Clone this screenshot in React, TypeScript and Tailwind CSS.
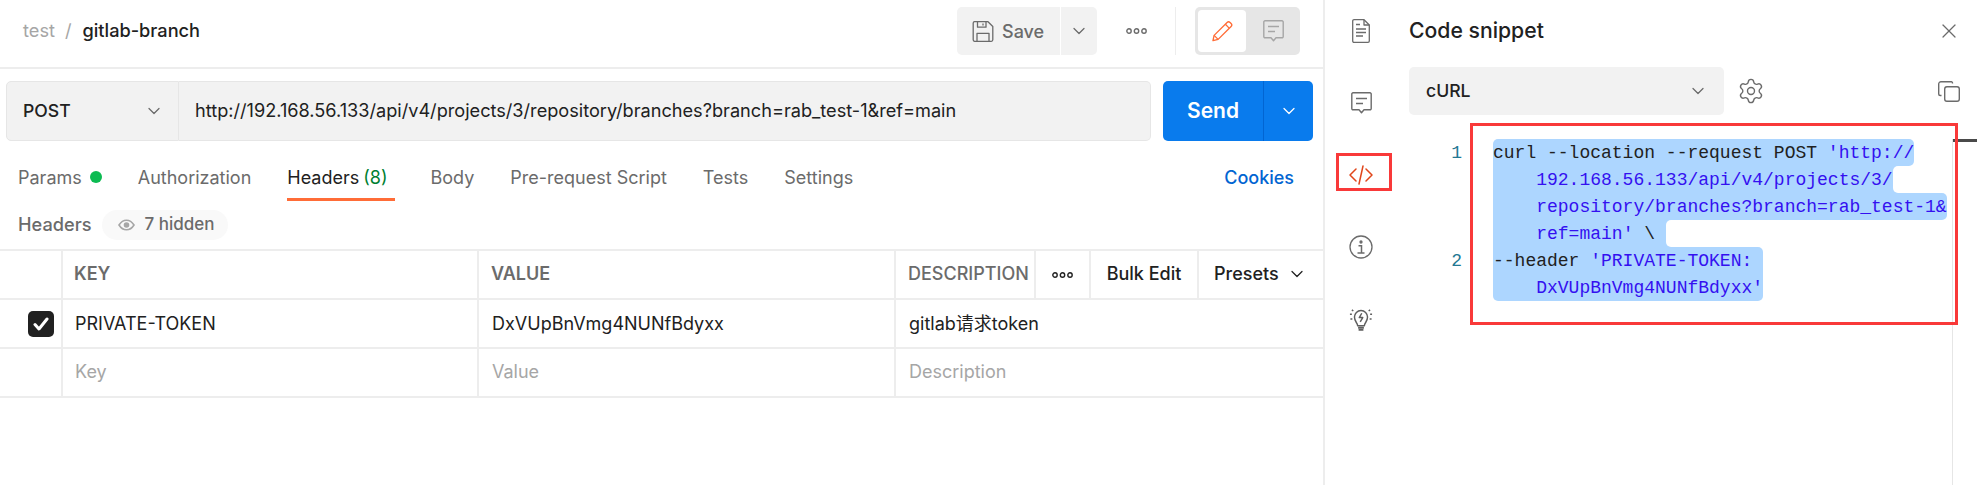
import React from 'react';
import { ChevronDown, X, Settings } from 'lucide-react';

const DotsIcon = ({ className = '' }: { className?: string }) => (
  <svg viewBox="0 0 21 6" className={className} fill="none" stroke="currentColor" strokeWidth="1.4">
    <circle cx="3" cy="3" r="2.2" />
    <circle cx="10.5" cy="3" r="2.2" />
    <circle cx="18" cy="3" r="2.2" />
  </svg>
);

const SaveIcon = () => (
  <svg viewBox="0 0 21 21" className="w-[22px] h-[21px] text-[#6b6b6b]" fill="none" stroke="currentColor" strokeWidth="1.3" strokeLinejoin="round">
    <path d="M2 .7h13.5l4.8 4.8v13.3a1.5 1.5 0 0 1-1.5 1.5H2a1.5 1.5 0 0 1-1.3-1.5V2A1.5 1.5 0 0 1 2 .7z" />
    <path d="M5 .7v5.5h8.5V.7M10.5 2.5v2M4.5 20.3v-8h12v8" />
  </svg>
);

const PencilIcon = () => (
  <svg viewBox="0 0 22 22" className="w-[21px] h-[22px] text-[#ff6c37]" fill="none" stroke="currentColor" strokeWidth="1.4" strokeLinejoin="round">
    <path d="M1 21l1.2-5.4L15.8 2a2.2 2.2 0 0 1 3.1 0l1.1 1.1a2.2 2.2 0 0 1 0 3.1L6.4 19.8 1 21z" />
    <path d="M14 4l4 4M2.2 15.6l4.2 4.2" />
  </svg>
);

const CommentIcon = ({ className = '' }: { className?: string }) => (
  <svg viewBox="0 0 21 22" className={className} fill="none" stroke="currentColor" strokeWidth="1.4" strokeLinejoin="round">
    <path d="M2 .8h17a1.2 1.2 0 0 1 1.2 1.2v14.6a1.2 1.2 0 0 1-1.2 1.2h-6l-2.5 3-2.5-3H2A1.2 1.2 0 0 1 .8 16.6V2A1.2 1.2 0 0 1 2 .8z" />
    <path d="M5 6.5h11M5 11.5h7" />
  </svg>
);

const DocIcon = () => (
  <svg viewBox="0 0 18 24" className="w-[18px] h-[24px] text-[#6b6b6b]" fill="none" stroke="currentColor" strokeWidth="1.3" strokeLinejoin="round">
    <path d="M2 .7h10l5.3 5.3v16a1.3 1.3 0 0 1-1.3 1.3H2A1.3 1.3 0 0 1 .7 22V2A1.3 1.3 0 0 1 2 .7z" />
    <path d="M12 .7v5.3h5.3M4 5.5h4M4 10h10M4 13.5h10M4 17h7" />
  </svg>
);

const CodeIcon = () => (
  <svg viewBox="0 0 24 20" className="w-[24px] h-[20px] text-[#e0461b]" fill="none" stroke="currentColor" strokeWidth="1.5" strokeLinecap="round" strokeLinejoin="round">
    <path d="M7 4l-6 6 6 6M17 4l6 6-6 6M14 1l-4 18" />
  </svg>
);

const InfoIcon = () => (
  <svg viewBox="0 0 24 24" className="w-[24px] h-[24px] text-[#6b6b6b]" fill="none" stroke="currentColor" strokeWidth="1.3">
    <circle cx="12" cy="12" r="11" />
    <circle cx="12" cy="7" r="1" fill="currentColor" />
    <path d="M9.5 10.8h3v7M8.5 18h7" strokeWidth="1.5" />
  </svg>
);

const BulbIcon = () => (
  <svg viewBox="0 0 24 26" className="w-[24px] h-[25px] text-[#5f5f5f]" fill="none" stroke="currentColor" strokeWidth="1.5" strokeLinejoin="round">
    <path d="M8.5 19.5c0-3-3.3-4.2-3.3-9a6.8 6.800 0 0 1 13.600 0c0 4.800-3.300 6-3.300 9z" />
    <path d="M12.800 6.500l-2.600 4.500h3.600l-2.600 4.500" />
    <path d="M9 21.500h6M9.500 23.800h5" strokeWidth="2" />
    <path d="M.5 7.500h2M1 12.500h2M21.500 7.500h2M21 12.500h2M2.500 3l1.500 1.200M21.500 3L20 4.200" />
  </svg>
);

const CopyIcon = () => (
  <svg viewBox="0 0 22 21" className="w-[22px] h-[21px] text-[#6b6b6b]" fill="none" stroke="currentColor" strokeWidth="1.4" strokeLinejoin="round">
    <rect x="6.7" y="5.7" width="14.6" height="14.6" rx="2.2" />
    <path d="M14.5 2.5V2A1.3 1.3 0 0 0 13 .7H3A2.3 2.3 0 0 0 .7 3v10a1.5 1.5 0 0 0 1.5 1.5h1.3" />
  </svg>
);

const EyeIcon = () => (
  <svg viewBox="0 0 17 12" className="w-[17px] h-[12px] text-[#a6a6a6]" fill="none" stroke="currentColor" strokeWidth="1.6">
    <path d="M1 6c2-3.2 4.500-4.800 7.500-4.800S14 2.800 16 6c-2 3.200-4.500 4.800-7.500 4.800S3 9.200 1 6z" />
    <circle cx="8.500" cy="6" r="2" fill="currentColor" />
  </svg>
);

const tabs = ['Body', 'Pre-request Script', 'Tests', 'Settings'];

// each visual line of the wrapped snippet
const codeLines = [
  { no: '1', dark: 'curl --location --request POST ', blue: "'http://", corners: 'rounded-tl-[5px] rounded-r-[5px]' },
  { no: '', dark: '', blue: '    192.168.56.133/api/v4/projects/3/', corners: '', notch: true },
  { no: '', dark: '', blue: '    repository/branches?branch=rab_test-1&', corners: 'rounded-r-[5px]' },
  { no: '', dark: '    ', blue: "ref=main'", tail: ' \\ ', corners: '', notch: true },
  { no: '2', dark: '--header ', blue: "'PRIVATE-TOKEN: ", corners: 'rounded-tr-[5px]' },
  { no: '', dark: '', blue: "    DxVUpBnVmg4NUNfBdyxx'", corners: 'rounded-b-[5px]' },
];

export default function App() {
  return (
    <div className="relative w-[1977px] h-[485px] bg-white flex overflow-hidden font-['Inter','Noto_Sans_CJK_SC',sans-serif] text-[18px] text-[#212121]">
      {/* request pane */}
      <div className="w-[1325px] shrink-0 border-r-2 border-[#ededed] flex flex-col">
        <div className="h-[69px] shrink-0 border-b-2 border-[#ededed] flex items-center pb-[5px] pl-[23px] pr-[23px]">
          <span className="text-[18.2px] text-[#a6a6a6]">test</span>
          <span className="text-[18.2px] text-[#a6a6a6] ml-[10px]">/</span>
          <span className="text-[18.2px] font-medium ml-[11px]">gitlab-branch</span>
          <div className="ml-auto flex items-center">
            <div className="w-[103px] h-[48px] bg-[#f2f2f2] rounded-l-[5px] flex items-center pl-[15px] gap-[8px] text-[18px] font-medium text-[#6b6b6b]">
              <SaveIcon />
              Save
            </div>
            <div className="w-[36px] h-[48px] ml-[1px] bg-[#f2f2f2] rounded-r-[5px] flex items-center justify-center text-[#6b6b6b]">
              <ChevronDown size={20} strokeWidth={1.5} />
            </div>
            <div className="w-[78px] flex justify-center text-[#6b6b6b]">
              <DotsIcon className="w-[21px] h-[6px]" />
            </div>
            <div className="w-px h-[48px] bg-[#ededed]" />
            <div className="ml-[19px] w-[105px] h-[48px] bg-[#e6e6e6] rounded-[5px] flex items-center pl-[3px]">
              <div className="w-[48px] h-[42px] bg-white rounded-[4px] flex items-center justify-center">
                <PencilIcon />
              </div>
              <div className="flex-1 flex justify-center">
                <CommentIcon className="w-[21px] h-[22px] text-[#a6a6a6]" />
              </div>
            </div>
          </div>
        </div>

        {/* url bar */}
        <div className="flex mt-[12px] pl-[6px] pr-[10px] h-[60px] shrink-0">
          <div className="w-[173px] h-full bg-[#f2f2f2] border border-[#e6e6e6] rounded-l-[5px] flex items-center pl-[16px] pr-[14px] text-[17.6px] font-medium">
            POST
            <ChevronDown size={20} strokeWidth={1.5} className="ml-auto text-[#6b6b6b]" />
          </div>
          <div className="w-[972px] h-full bg-[#f2f2f2] border border-l-0 border-[#e6e6e6] rounded-r-[5px] flex items-center pl-[16px] text-[18.15px]">
            http://192.168.56.133/api/v4/projects/3/repository/branches?branch=rab_test-1&amp;ref=main
          </div>
          <div className="ml-[12px] w-[150px] h-full bg-[#097bed] rounded-[5px] flex text-white">
            <div className="w-[101px] flex items-center justify-center text-[21px] font-semibold border-r border-[#0265d2]">Send</div>
            <div className="flex-1 flex items-center justify-center">
              <ChevronDown size={20} strokeWidth={1.5} />
            </div>
          </div>
        </div>

        {/* tabs */}
        <div className="flex items-stretch h-[48px] mt-[12px] shrink-0 pl-[18px] pr-[29px] gap-[36px] text-[18px] text-[#6b6b6b]">
          <div className="flex items-center gap-[8px]">
            Params
            <span className="w-[12px] h-[12px] rounded-full bg-[#0cbb52]" />
          </div>
          <div className="flex items-center">Authorization</div>
          <div className="flex items-center border-b-[3px] border-[#ff6c37] pt-[3px] text-[#212121] pr-[7px]">
            Headers
            <span className="ml-[4px] text-[#007f31]">(8)</span>
          </div>
          {tabs.map((tab) => (
            <div key={tab} className="flex items-center">{tab}</div>
          ))}
          <div className="ml-auto flex items-center font-medium text-[#0265d2]">Cookies</div>
        </div>

        <div className="flex items-center h-[30px] mt-[9px] shrink-0 pl-[18px] text-[#6b6b6b] text-[18.2px] font-medium">
          Headers
          <div className="ml-[10px] h-[30px] w-[126px] rounded-full bg-[#f9f9f9] flex items-center pl-[16px] gap-[10px] text-[17px]">
            <EyeIcon />
            7 hidden
          </div>
        </div>

        {/* headers table */}
        <div className="mt-[9px] border-t-2 border-[#ededed]">
          <div className="flex h-[49px] border-b-2 border-[#ededed] items-stretch">
            <div className="w-[63px] border-r-2 border-[#ededed]" />
            <div className="w-[416px] border-r-2 border-[#ededed] flex items-center pb-[2px] pl-[11px] font-semibold text-[#6b6b6b]">KEY</div>
            <div className="w-[417px] border-r-2 border-[#ededed] flex items-center pb-[2px] pl-[12px] font-semibold text-[#6b6b6b]">VALUE</div>
            <div className="w-[140px] border-r-2 border-[#ededed] flex items-center pb-[2px] pl-[12px] font-medium text-[#6b6b6b] whitespace-nowrap">DESCRIPTION</div>
            <div className="w-[55px] border-r-2 border-[#ededed] flex items-center justify-center">
              <DotsIcon className="w-[21px] h-[6px] text-[#212121]" />
            </div>
            <div className="w-[108px] border-r-2 border-[#ededed] flex items-center pb-[2px] justify-center font-medium">Bulk Edit</div>
            <div className="flex-1 flex items-center pb-[2px] pl-[15px] font-medium">
              Presets
              <ChevronDown size={20} strokeWidth={1.5} className="ml-[8px]" />
            </div>
          </div>
          <div className="flex h-[49px] border-b-2 border-[#ededed] items-stretch">
            <div className="w-[63px] border-r-2 border-[#ededed] flex items-center justify-end pr-[7px]">
              <div className="w-[26px] h-[26px] bg-[#212121] rounded-[5px] flex items-center justify-center">
                <svg viewBox="0 0 16 14" className="w-[16px] h-[14px]" fill="none" stroke="white" strokeWidth="3" strokeLinecap="round" strokeLinejoin="round">
                  <path d="M2 7.500l4 4.500 8-10" />
                </svg>
              </div>
            </div>
            <div className="w-[416px] border-r-2 border-[#ededed] flex items-center pl-[12px]">PRIVATE-TOKEN</div>
            <div className="w-[417px] border-r-2 border-[#ededed] flex items-center pl-[13px]">DxVUpBnVmg4NUNfBdyxx</div>
            <div className="flex-1 flex items-center pl-[13px]">gitlab请求token</div>
          </div>
          <div className="flex h-[49px] border-b-2 border-[#ededed] items-stretch text-[#a6a6a6]">
            <div className="w-[63px] border-r-2 border-[#ededed]" />
            <div className="w-[416px] border-r-2 border-[#ededed] flex items-center pb-[2px] pl-[12px]">Key</div>
            <div className="w-[417px] border-r-2 border-[#ededed] flex items-center pb-[2px] pl-[13px]">Value</div>
            <div className="flex-1 flex items-center pb-[2px] pl-[13px]">Description</div>
          </div>
        </div>
      </div>

      {/* context bar icons */}
      <div className="w-[72px] shrink-0 flex flex-col items-center gap-[10px]">
        <div className="h-[62px] flex items-center"><DocIcon /></div>
        <div className="h-[62px] flex items-center"><CommentIcon className="w-[21px] h-[22px] text-[#6b6b6b]" /></div>
        <div className="h-[62px] flex items-center"><CodeIcon /></div>
        <div className="h-[62px] flex items-center"><InfoIcon /></div>
        <div className="h-[62px] flex items-center"><BulbIcon /></div>
      </div>

      {/* code snippet */}
      <div className="flex-1 pl-[12px] flex flex-col">
        <div className="h-[62px] shrink-0 flex items-center pr-[16px]">
          <span className="text-[21.2px] font-medium">Code snippet</span>
          <X size={24} strokeWidth={1.2} className="ml-auto text-[#6b6b6b]" />
        </div>
        <div className="mt-[5px] h-[48px] shrink-0 flex items-center pr-[17px]">
          <div className="w-[315px] h-full bg-[#f2f2f2] rounded-[5px] flex items-center pl-[17px] pr-[16px] text-[17.6px] font-medium">
            cURL
            <ChevronDown size={20} strokeWidth={1.5} className="ml-auto text-[#6b6b6b]" />
          </div>
          <Settings size={28} strokeWidth={1.2} className="ml-[13px] text-[#6b6b6b]" />
          <div className="ml-auto"><CopyIcon /></div>
        </div>
        <div className="mt-[24px] font-['Liberation_Mono',monospace] text-[18px] leading-[29px]">
          {codeLines.map((line, i) => (
            <div key={i} className="flex h-[27px]">
              <div className="w-[53px] text-right text-[#237893]">{line.no}</div>
              <div className={`ml-[31px] whitespace-pre bg-[#add6ff] ${line.corners}`}>
                <span>{line.dark}</span>
                <span className="text-[#3410f0]">{line.blue}</span>
                {line.tail && <span>{line.tail}</span>}
              </div>
              {line.notch && (
                <div className="w-[5px] bg-[#add6ff]">
                  <div className="h-full bg-white rounded-l-[5px]" />
                </div>
              )}
            </div>
          ))}
        </div>
      </div>

      {/* editor ruler */}
      <div className="absolute left-[1952px] top-[139px] bottom-0 w-px bg-[#e6e6e6]" />
      <div className="absolute left-[1953px] top-[139px] right-0 h-[3px] bg-[#4a4a4a]" />

      {/* red annotation boxes */}
      <div className="absolute left-[1336px] top-[153px] w-[56px] h-[38px] border-[3px] border-[#f93939]" />
      <div className="absolute left-[1470px] top-[123px] w-[488px] h-[202px] border-[3px] border-[#f93939]" />
    </div>
  );
}
